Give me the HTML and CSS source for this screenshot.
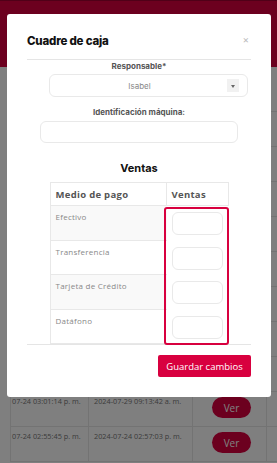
FILE: index.html
```html
<!DOCTYPE html>
<html lang="es">
<head>
  <meta charset="UTF-8" />
  <meta name="viewport" content="width=device-width, initial-scale=1.0"/>
  <title>Cuadre de caja</title>
  <link rel="stylesheet" href="styles.css">
</head>
<body>
  <header class="topbar"></header>

  <main class="records">
    <div class="rec-row"><div class="c1">07-25 08:12:40 a. m.</div><div class="c2">2024-07-25 08:40:11 a. m.</div><div class="c3"><span class="ver">Ver</span></div></div>
    <div class="rec-row"><div class="c1">07-25 08:01:02 a. m.</div><div class="c2">2024-07-25 08:05:19 a. m.</div><div class="c3"><span class="ver">Ver</span></div></div>
    <div class="rec-row"><div class="c1">07-24 07:44:15 p. m.</div><div class="c2">2024-07-24 07:50:03 p. m.</div><div class="c3"><span class="ver">Ver</span></div></div>
    <div class="rec-row"><div class="c1">07-24 06:30:09 p. m.</div><div class="c2">2024-07-24 06:33:47 p. m.</div><div class="c3"><span class="ver">Ver</span></div></div>
    <div class="rec-row"><div class="c1">07-24 05:12:51 p. m.</div><div class="c2">2024-07-24 05:20:30 p. m.</div><div class="c3"><span class="ver">Ver</span></div></div>
    <div class="rec-row"><div class="c1">07-24 04:58:22 p. m.</div><div class="c2">2024-07-24 05:01:10 p. m.</div><div class="c3"><span class="ver">Ver</span></div></div>
    <div class="rec-row"><div class="c1">07-24 04:20:18 p. m.</div><div class="c2">2024-07-24 04:31:55 p. m.</div><div class="c3"><span class="ver">Ver</span></div></div>
    <div class="rec-row"><div class="c1">07-24 03:40:06 p. m.</div><div class="c2">2024-07-24 03:44:28 p. m.</div><div class="c3"><span class="ver">Ver</span></div></div>
    <div class="rec-row"><div class="c1">07-24 03:20:41 p. m.</div><div class="c2">2024-07-24 03:25:12 p. m.</div><div class="c3"><span class="ver">Ver</span></div></div>
    <div class="rec-row"><div class="c1">07-24 03:01:14 p. m.</div><div class="c2">2024-07-29 09:13:42 a. m.</div><div class="c3"><span class="ver">Ver</span></div></div>
    <div class="rec-row"><div class="c1">07-24 02:55:45 p. m.</div><div class="c2">2024-07-24 02:57:03 p. m.</div><div class="c3"><span class="ver">Ver</span></div></div>
  </main>

  <div class="backdrop"></div>

  <div class="modal">
    <div class="modal-header">
      <h2>Cuadre de caja</h2>
      <span class="close">&times;</span>
    </div>

    <div class="modal-body">
      <label class="field-label">Responsable*</label>
      <div class="select">
        <span class="select-value">Isabel</span>
        <span class="select-arrow"></span>
      </div>

      <label class="field-label">Identificación máquina:</label>
      <input class="text-input" type="text">

      <h3>Ventas</h3>

      <div class="pay-table">
        <div class="th first">Medio de pago</div>
        <div class="th">Ventas</div>

        <div class="td name odd r1">Efectivo</div>
        <div class="td name r2">Transferencia</div>
        <div class="td name odd r3">Tarjeta de Crédito</div>
        <div class="td name r4">Datáfono</div>

        <div class="ventas-box"></div>
        <div class="td amount r1"><input type="text"></div>
        <div class="td amount r2"><input type="text"></div>
        <div class="td amount r3"><input type="text"></div>
        <div class="td amount r4"><input type="text"></div>
      </div>
    </div>

    <div class="modal-footer">
      <button class="btn-save">Guardar cambios</button>
    </div>
  </div>
</body>
</html>
```

FILE: styles.css
```css
body {
  margin: 0;
  background: #fff;
  font-family: Inter, "Noto Sans", sans-serif;
  overflow: hidden;
}
.topbar {
  height: 67px;
  background: #d8003f;
  border-top: 1px solid #a00030;
  box-sizing: border-box;
}
.records {
  padding-top: 10px;
}
.rec-row {
  display: grid;
  grid-template-columns: 78px 104px 75px;
  height: 35px;
  margin-left: 10px;
  border-bottom: 1px solid #e6e6e6;
  box-sizing: border-box;
  font-family: "Open Sans", sans-serif;
  font-size: 7.3px;
  color: #777;
}
.rec-row > div {
  border-left: 1px solid #e6e6e6;
  padding-top: 4px;
}
.rec-row .c1 { padding-left: 1px; }
.rec-row .c2 { padding-left: 5px; }
.rec-row .c3 {
  border-right: 1px solid #e6e6e6;
  display: flex;
  justify-content: center;
  padding: 5px 0 0 4px;
}
.ver {
  width: 39px;
  height: 21px;
  border-radius: 11px;
  background: #d8003f;
  color: #fff;
  font-size: 10px;
  display: flex;
  align-items: center;
  justify-content: center;
}
.backdrop {
  position: fixed;
  inset: 0;
  background: rgba(0, 0, 0, 0.5);
}
.modal {
  position: fixed;
  top: 14px;
  left: 7px;
  width: 264px;
  background: #fff;
  border-radius: 3px;
}
.modal-header {
  margin: 0 20px;
  padding: 17px 0 8px;
  border-bottom: 1px solid #e5e5e5;
  display: flex;
  justify-content: space-between;
  align-items: center;
}
.modal-header h2 {
  margin: 0;
  font-size: 11.5px;
  line-height: 20px;
  font-weight: 800;
  letter-spacing: -0.2px;
  color: #111;
}
.close {
  color: #bbb;
  font-size: 10px;
  margin-right: 2px;
  margin-top: -4px;
}
.modal-body {
  margin: 0 20px;
  display: flex;
  flex-direction: column;
  align-items: center;
}
.field-label {
  font-size: 8px;
  line-height: 12px;
  font-weight: 700;
  color: #555;
}
.select {
  width: 199px;
  height: 23px;
  margin: 2px 0 0 19px;
  border: 1px solid #e9e9e9;
  border-radius: 6px;
  box-sizing: border-box;
  display: flex;
  align-items: center;
  padding-right: 8px;
}
.select-value {
  flex: 1;
  text-align: center;
  font-size: 8px;
  color: #888;
  padding-left: 2px;
}
.select-arrow {
  width: 12px;
  height: 13px;
  background: #f1f1f1;
  position: relative;
}
.select-arrow::after {
  content: "";
  position: absolute;
  left: 4px;
  top: 6px;
  border-left: 2px solid transparent;
  border-right: 2px solid transparent;
  border-top: 3px solid #666;
}
.select + .field-label {
  margin-top: 9px;
}
.text-input {
  width: 198px;
  height: 22px;
  margin-top: 3px;
  border: 1px solid #e9e9e9;
  border-radius: 6px;
  box-sizing: border-box;
}
.modal-body h3 {
  margin: 18px 0 7px;
  font-size: 11px;
  line-height: 14px;
  font-weight: 700;
  color: #111;
}
.pay-table {
  display: grid;
  grid-template-columns: 116px 62px;
  grid-template-rows: 23px repeat(4, 34.5px);
  border-left: 1px solid #e8e8e8;
  border-top: 1px solid #e8e8e8;
  box-sizing: border-box;
  font-family: "Open Sans", sans-serif;
}
.th {
  grid-row: 1;
  font-size: 9.5px;
  font-weight: 700;
  letter-spacing: 0.3px;
  color: #555;
  padding: 5px 0 0 5px;
  border-right: 1px solid #e8e8e8;
  border-bottom: 1px solid #e8e8e8;
}
.th.first { grid-column: 1; }
.th + .th { grid-column: 2; }
.td.name {
  grid-column: 1;
  font-size: 8px;
  letter-spacing: 0.25px;
  color: #888;
  padding: 5px 0 0 5px;
  border-bottom: 1px solid #e8e8e8;
}
.td.odd { background: #f9f9f9; }
.r1 { grid-row: 2; }
.r2 { grid-row: 3; }
.r3 { grid-row: 4; }
.r4 { grid-row: 5; }
.td.amount {
  grid-column: 2;
  padding: 6px 0 0 5px;
}
.td.amount input {
  width: 51px;
  height: 23px;
  border: 1px solid #e9e9e9;
  border-radius: 6px;
  box-sizing: border-box;
  display: block;
}
.ventas-box {
  grid-column: 2;
  grid-row: 2 / 6;
  margin: 1px 0 -1px -3px;
  border: 2px solid #d8003f;
  border-radius: 3px;
}
.modal-footer {
  margin: 0 20px;
  padding: 10px 0 20px;
  border-top: 1px solid #e5e5e5;
  display: flex;
  justify-content: flex-end;
}
.btn-save {
  width: 93px;
  height: 22px;
  border: none;
  border-radius: 2px;
  background: #d8003f;
  color: #fff;
  font-family: "Open Sans", sans-serif;
  font-size: 9.5px;
  padding: 0;
}
```
